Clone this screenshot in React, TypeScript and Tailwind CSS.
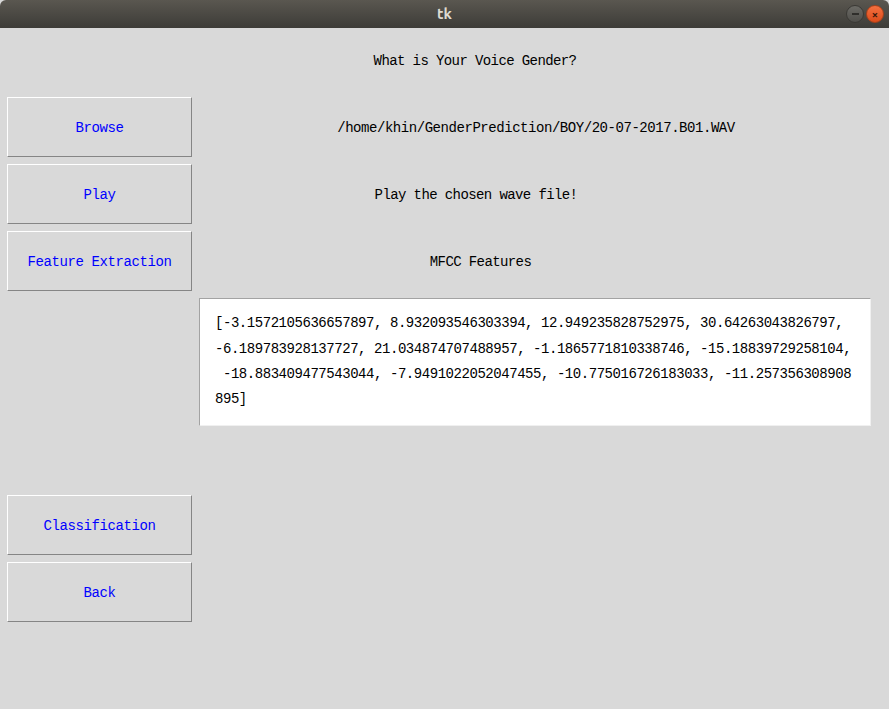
const mono = { fontFamily: '"Liberation Mono", "DejaVu Sans Mono", monospace' }

function TkButton({ label }: { label: string }) {
  return (
    <button
      className="ml-[7px] w-[185px] h-[60px] shrink-0 bg-[#d9d9d9] border border-t-white border-l-white border-b-[#858585] border-r-[#858585] text-[#0000ff] text-[14px] tracking-[-0.4px] pt-[3px]"
      style={mono}
    >
      {label}
    </button>
  )
}

export default function App() {
  return (
    <div className="w-[889px] h-[709px] flex flex-col bg-[#d9d9d9] overflow-hidden">
      {/* title bar */}
      <div className="h-[28px] shrink-0 relative flex items-center justify-center bg-gradient-to-b from-[#5a5750] to-[#3d3c38] rounded-t-[6px]">
        <span className="text-[#dfdbd2] text-[15px] font-bold" style={{ fontFamily: '"Ubuntu", "DejaVu Sans", sans-serif' }}>
          tk
        </span>
        <div className="absolute right-[5px] top-[5px] flex gap-[2px]">
          <div className="w-[18px] h-[18px] rounded-full bg-gradient-to-b from-[#6c6b66] to-[#4f4e4a] border border-[#3a3935] flex items-center justify-center">
            <div className="w-[7px] h-[1.5px] bg-[#2f2e2b]" />
          </div>
          <div className="w-[18px] h-[18px] rounded-full bg-gradient-to-b from-[#f4703f] to-[#dc4b18] border border-[#a8401a] flex items-center justify-center text-[#3a1a0c] text-[11px] font-bold leading-none">
            ×
          </div>
        </div>
      </div>

      <div className="flex flex-col text-[14px] text-black tracking-[-0.6px]" style={mono}>
        <div className="h-[69px] flex">
          <div className="ml-[191px] w-[568px] text-center pt-[23px]">What is Your Voice Gender?</div>
        </div>

        <div className="flex items-center h-[60px]">
          <TkButton label="Browse" />
          <div className="w-[688px] text-center pt-[3px] tracking-[-0.45px]">/home/khin/GenderPrediction/BOY/20-07-2017.B01.WAV</div>
        </div>

        <div className="flex items-center h-[60px] mt-[7px]">
          <TkButton label="Play" />
          <div className="w-[568px] text-center pt-[3px]">Play the chosen wave file!</div>
        </div>

        <div className="flex items-center h-[60px] mt-[7px]">
          <TkButton label="Feature Extraction" />
          <div className="w-[577px] text-center pt-[3px]">MFCC Features</div>
        </div>

        <div className="ml-[199px] mt-[7px] w-[672px] h-[128px] bg-white border border-t-[#a3a3a3] border-l-[#a3a3a3] border-b-[#f0f0f0] border-r-[#f0f0f0] pl-[15px] pt-[12px] leading-[25px] tracking-[-0.45px] whitespace-nowrap">
          <div>[-3.1572105636657897, 8.932093546303394, 12.949235828752975, 30.64263043826797,</div>
          <div className="pt-[1px]">-6.189783928137727, 21.034874707488957, -1.1865771810338746, -15.18839729258104,</div>
          <div>&nbsp;-18.883409477543044, -7.9491022052047455, -10.775016726183033, -11.257356308908</div>
          <div>895]</div>
        </div>

        <div className="flex items-center h-[60px] mt-[69px]">
          <TkButton label="Classification" />
        </div>

        <div className="flex items-center h-[60px] mt-[7px]">
          <TkButton label="Back" />
        </div>
      </div>
    </div>
  )
}
